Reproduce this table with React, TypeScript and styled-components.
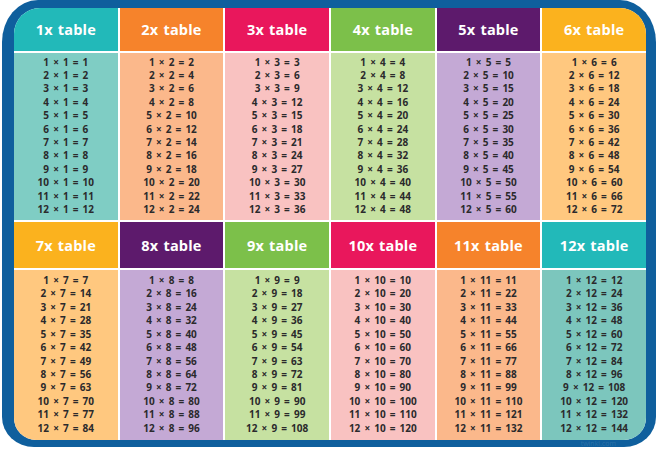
import * as React from 'react';
import styled, { createGlobalStyle } from 'styled-components';

const GlobalStyle = createGlobalStyle`
  html, body {
    margin: 0;
    padding: 0;
    background: #ffffff;
  }
  body {
    font-family: 'Open Sans', 'Liberation Sans', sans-serif;
  }
`;

type Palette = { head: string; body: string };

const teal: Palette = { head: '#22b9b9', body: '#7fcdc4' };
const orange: Palette = { head: '#f6832b', body: '#fbb88b' };
const pink: Palette = { head: '#e9175c', body: '#f9c2c1' };
const green: Palette = { head: '#7cc04a', body: '#c6e1a1' };
const purple: Palette = { head: '#5d1a6c', body: '#c4a9d5' };
const amber: Palette = { head: '#fbb21e', body: '#ffc87f' };

const tables: { n: number; colors: Palette }[] = [
  { n: 1, colors: teal },
  { n: 2, colors: orange },
  { n: 3, colors: pink },
  { n: 4, colors: green },
  { n: 5, colors: purple },
  { n: 6, colors: amber },
  { n: 7, colors: amber },
  { n: 8, colors: purple },
  { n: 9, colors: green },
  { n: 10, colors: pink },
  { n: 11, colors: orange },
  { n: 12, colors: { head: '#22b9b9', body: '#7cc6bd' } },
];

const steps = [1, 2, 3, 4, 5, 6, 7, 8, 9, 10, 11, 12];

function App() {
  return (
    <>
      <GlobalStyle />
      <Frame>
        <Panel>
          {tables.map(t => (
            <Card key={t.n}>
              <Header bg={t.colors.head} tall={t.n > 6}>
                {t.n}x table
              </Header>
              <Body bg={t.colors.body}>
                {steps.map(i => (
                  <Line key={i}>
                    {i} × {t.n} = {i * t.n}
                  </Line>
                ))}
              </Body>
            </Card>
          ))}
        </Panel>
        <Watermark>twinkl.com</Watermark>
      </Frame>
    </>
  );
}

const Frame = styled.div`
  position: relative;
  box-sizing: border-box;
  width: 654px;
  height: 447px;
  margin-left: 2px;
  padding: 8px 10px 7px 12px;
  background-color: #0f5f9d;
  border-radius: 0 0 32px 32px / 0 0 30px 30px;
  border-top-left-radius: 36px 42px;
  border-top-right-radius: 36px 42px;
`;

const Panel = styled.div`
  display: grid;
  grid-template-columns: repeat(6, 1fr);
  grid-template-rows: 212px 218px;
  gap: 2px;
  height: 100%;
  background-color: #ffffff;
  border-radius: 26px 26px 22px 22px;
  overflow: hidden;
`;

const Card = styled.div`
  display: flex;
  flex-direction: column;
  gap: 2px;
  min-width: 0;
`;

const Header = styled.div<{ bg: string; tall?: boolean }>`
  display: flex;
  align-items: center;
  justify-content: center;
  height: ${props => (props.tall ? '46px' : '43px')};
  flex-shrink: 0;
  background-color: ${props => props.bg};
  color: #ffffff;
  font-family: 'Open Sans', 'Liberation Sans', sans-serif;
  font-weight: 700;
  font-size: 14.5px;
  letter-spacing: 0.2px;
  word-spacing: 1px;
`;

const Body = styled.div<{ bg: string }>`
  flex: 1;
  display: flex;
  flex-direction: column;
  align-items: center;
  justify-content: center;
  background-color: ${props => props.bg};
  padding-bottom: 1px;
`;

const Line = styled.div`
  font-family: 'Open Sans', 'Liberation Sans', sans-serif;
  font-weight: 700;
  font-size: 10px;
  line-height: 13.4px;
  word-spacing: 1.5px;
  color: #2b2a2c;
  white-space: nowrap;
`;

const Watermark = styled.span`
  position: absolute;
  right: 40px;
  bottom: 0;
  font-family: 'Open Sans', 'Liberation Sans', sans-serif;
  font-size: 7px;
  line-height: 7px;
  color: rgba(255, 255, 255, 0.12);
`;

export default App;
